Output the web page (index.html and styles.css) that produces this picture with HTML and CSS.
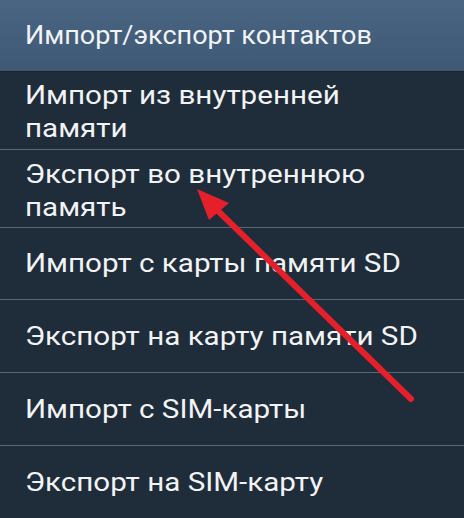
FILE: index.html
```html
<!DOCTYPE html>
<html lang="ru">
<head>
<meta charset="utf-8">
<link rel="stylesheet" href="styles.css">
</head>
<body>
<div class="screen">
  <div class="header"><span class="label head-label">Импорт/экспорт контактов</span></div>
  <ul class="menu">
    <li class="item double first"><span class="label">Импорт из внутренней<br>памяти</span></li>
    <li class="item double second"><span class="label">Экспорт во внутреннюю<br>память</span></li>
    <li class="item single short"><span class="label">Импорт с карты памяти SD</span></li>
    <li class="item single"><span class="label">Экспорт на карту памяти SD</span></li>
    <li class="item single"><span class="label">Импорт с SIM-карты</span></li>
    <li class="item single last"><span class="label">Экспорт на SIM-карту</span></li>
  </ul>
  <svg class="arrow" width="464" height="518" viewBox="0 0 464 518">
    <line x1="411" y1="399" x2="214" y2="207" stroke="#e5202a" stroke-width="6" stroke-linecap="round"/>
    <polygon points="197,189 229,203 209,220" fill="#e5202a"/>
  </svg>
</div>
</body>
</html>
```
FILE: styles.css
```css
html, body {
  margin: 0;
  padding: 0;
  background: #1f2c3a;
}
.screen {
  position: relative;
  width: 464px;
  height: 518px;
  overflow: hidden;
  background: #1f2c3a;
  font-family: Roboto, "Noto Sans", sans-serif;
  font-size: 25.5px;
  color: #f2f3f4;
}
.label {
  display: inline-block;
  transform: scaleX(1.16);
  transform-origin: left center;
  white-space: nowrap;
}
.header {
  height: 72px;
  box-sizing: border-box;
  display: flex;
  align-items: center;
  padding-left: 25px;
  background: linear-gradient(#4a6582, #3e5975);
  border-bottom: 1px solid #1a2532;
  font-size: 25px;
}
.head-label {
  transform: scaleX(1.08);
}
.menu {
  list-style: none;
  margin: 0;
  padding: 0;
}
.item {
  box-sizing: border-box;
  padding-left: 25px;
  border-bottom: 1px solid #5a6874;
  line-height: 33px;
}
.item.double {
  height: 78px;
  padding-top: 7px;
}
.item.second {
  padding-top: 8px;
}
.item.single {
  height: 73px;
  display: flex;
  align-items: center;
}
.item.short {
  height: 72px;
}
.item.last {
  border-bottom: none;
}
.arrow {
  position: absolute;
  left: 0;
  top: 0;
  pointer-events: none;
}
```
